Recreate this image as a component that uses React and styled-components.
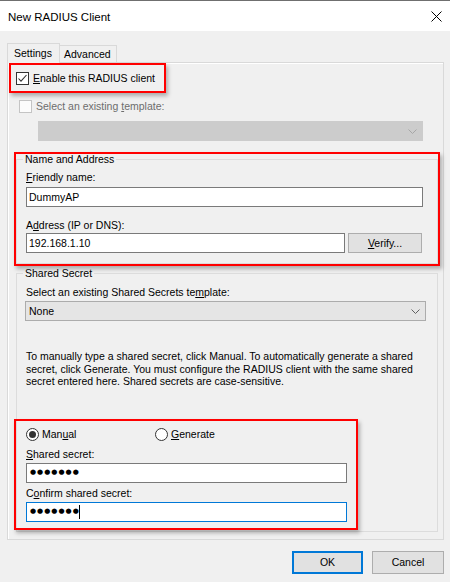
import React from 'react';
import styled, { createGlobalStyle } from 'styled-components';

const Global = createGlobalStyle`
  html, body { margin: 0; padding: 0; background: #f0f0f0; }
  body { font-family: "Liberation Sans", Arial, sans-serif; font-size: 10.5px; color: #000; }
  * { box-sizing: border-box; }
`;

const Window = styled.div`
  width: 450px;
  height: 582px;
  display: flex;
  flex-direction: column;
  border-top: 1px solid #6f6f6f;
  background: #f0f0f0;
  overflow: hidden;
`;

const TitleBar = styled.div`
  height: 30px;
  flex: none;
  background: #fff;
  display: flex;
  align-items: center;
  justify-content: space-between;
  padding: 0 8px;
`;

const TitleText = styled.span`
  font-size: 11.5px;
  line-height: 14px;
  margin-top: 1px;
`;

const Body = styled.div`
  padding: 12px 6px 0 7px;
  display: flex;
  flex-direction: column;
`;

const TabStrip = styled.div`
  display: flex;
  align-items: flex-end;
  height: 19px;
`;

const Tab = styled.div`
  height: ${p => (p.$active ? 20 : 17)}px;
  width: ${p => p.$w}px;
  margin-left: ${p => (p.$active ? 0 : -1)}px;
  margin-bottom: ${p => (p.$active ? -1 : 0)}px;
  padding-left: ${p => p.$pad}px;
  padding-bottom: ${p => (p.$active ? 1 : 0)}px;
  border: 1px solid #d9d9d9;
  border-bottom: none;
  background: #f0f0f0;
  display: flex;
  align-items: center;
  position: relative;
  z-index: ${p => (p.$active ? 2 : 1)};
`;

const Panel = styled.div`
  width: 437px;
  border: 1px solid #d9d9d9;
  box-shadow: inset 1px 1px 0 #fff;
  padding-bottom: 7px;
  display: flex;
  flex-direction: column;
  align-items: flex-start;
`;

const Highlight = styled.div`
  width: ${p => p.$w}px;
  ${p => (p.$h ? `height: ${p.$h}px;` : '')}
  margin: ${p => p.$m};
  padding: ${p => p.$pad || '0'};
  border: 2px solid #ff0000;
  box-shadow: 2px 3px 4px rgba(0, 0, 0, 0.28);
  display: flex;
  flex-direction: column;
  align-items: flex-start;
  justify-content: ${p => (p.$center ? 'center' : 'flex-start')};
`;

const CheckRow = styled.label`
  display: flex;
  align-items: center;
  gap: 4px;
  height: 13px;
  margin: ${p => p.$m || '0'};
  color: ${p => (p.$disabled ? '#6d6d6d' : '#000')};
  line-height: 13px;
`;

const Box = styled.span`
  width: 13px;
  height: 13px;
  flex: none;
  border: 1px solid ${p => (p.$disabled ? '#c4c4c4' : '#333')};
  background: ${p => (p.$disabled ? '#fcfcfc' : '#fff')};
  display: flex;
  align-items: center;
  justify-content: center;
`;

const Select = styled.div`
  width: ${p => p.$w}px;
  height: 20px;
  margin: ${p => p.$m || '0'};
  background: ${p => (p.$disabled ? '#cccccc' : '#e5e5e5')};
  border: 1px solid ${p => (p.$disabled ? '#cccccc' : '#acacac')};
  display: flex;
  align-items: center;
  justify-content: space-between;
  padding: 0 5px 0 3px;
  line-height: 13px;
`;

const Group = styled.fieldset`
  margin: ${p => p.$m || '0'};
  width: 422px;
  min-width: 0;
  border: 1px solid #dcdcdc;
  padding: ${p => p.$pad};
  display: flex;
  flex-direction: column;
  align-items: flex-start;
`;

const Legend = styled.legend`
  padding: 0 2px;
  margin-left: -3px;
  line-height: ${p => p.$lh}px;
  font-size: 10.5px;
`;

const Label = styled.div`
  line-height: 13px;
  height: 13px;
  margin: ${p => p.$m || '0'};
  white-space: nowrap;
`;

const Input = styled.div`
  width: ${p => p.$w}px;
  height: 20px;
  flex: none;
  margin: ${p => p.$m || '0'};
  background: #fff;
  border: 1px solid ${p => (p.$focus ? '#0078d7' : '#7a7a7a')};
  display: flex;
  align-items: center;
  padding-left: 2px;
  line-height: 13px;
`;

const Row = styled.div`
  display: flex;
  align-items: center;
  gap: ${p => p.$gap || 0}px;
  margin: ${p => p.$m || '0'};
`;

const Button = styled.div`
  width: ${p => p.$w}px;
  height: ${p => p.$h || 20}px;
  flex: none;
  background: #e1e1e1;
  border: ${p => (p.$default ? '2px solid #0078d7' : '1px solid #adadad')};
  display: flex;
  align-items: center;
  justify-content: center;
  line-height: 13px;
`;

const Paragraph = styled.p`
  margin: ${p => p.$m};
  line-height: 12.5px;
  white-space: nowrap;
`;

const RadioItem = styled.label`
  display: flex;
  align-items: center;
  gap: 3px;
  height: 13px;
  width: ${p => (p.$w ? `${p.$w}px` : 'auto')};
  line-height: 13px;
`;

const RadioCircle = styled.span`
  width: 13px;
  height: 13px;
  flex: none;
  border-radius: 50%;
  border: 1px solid #333;
  background: #fff;
  display: flex;
  align-items: center;
  justify-content: center;
  &::after {
    content: '';
    display: ${p => (p.$on ? 'block' : 'none')};
    width: 7px;
    height: 7px;
    border-radius: 50%;
    background: #333;
  }
`;

const Dots = styled.span`
  font-family: "DejaVu Sans", sans-serif;
  font-size: 7px;
  letter-spacing: 1px;
  line-height: 13px;
  margin-left: 1px;
`;

const Caret = styled.span`
  width: 1px;
  height: 14px;
  background: #000;
  margin-left: -1px;
`;

const ButtonBar = styled.div`
  display: flex;
  justify-content: flex-end;
  gap: 9px;
  margin-top: 11px;
`;

const Chevron = ({ color }) => (
  <svg width="9" height="5" viewBox="0 0 9 5">
    <polyline points="0.5,0.5 4.5,4.5 8.5,0.5" fill="none" stroke={color} strokeWidth="1" />
  </svg>
);

export default function App() {
  return (
    <>
      <Global />
      <Window>
        <TitleBar>
          <TitleText>New RADIUS Client</TitleText>
          <svg width="11" height="11" viewBox="0 0 11 11">
            <path d="M0.5 0.5 L10.5 10.5 M10.5 0.5 L0.5 10.5" stroke="#000" strokeWidth="1" />
          </svg>
        </TitleBar>
        <Body>
          <TabStrip>
            <Tab $active $w={53} $pad={6}>Settings</Tab>
            <Tab $w={58} $pad={4}>Advanced</Tab>
          </TabStrip>
          <Panel>
            <Highlight $w={157} $h={30} $m="0 0 0 1px" $pad="0 0 0 5px" $center>
              <CheckRow>
                <Box>
                  <svg width="11" height="11" viewBox="0 0 11 11">
                    <polyline points="1.5,5.5 4,8.2 9.5,2" fill="none" stroke="#333" strokeWidth="1.1" />
                  </svg>
                </Box>
                <span><u>E</u>nable this RADIUS client</span>
              </CheckRow>
            </Highlight>

            <CheckRow $disabled $m="7px 0 0 11px">
              <Box $disabled />
              <span>Select an existing <u>t</u>emplate:</span>
            </CheckRow>

            <Select $disabled $w={385} $m="8px 0 0 30px">
              <span />
              <Chevron color="#a6a6a6" />
            </Select>

            <Highlight $w={426} $m="11px 0 0 6px">
              <Group $pad="7px 0 10px 9px">
                <Legend $lh={10}>Name and Address</Legend>
                <Label><u>F</u>riendly name:</Label>
                <Input $w={397} $m="3px 0 0 0">DummyAP</Input>
                <Label $m="12px 0 0 0">A<u>d</u>dress (IP or DNS):</Label>
                <Row $gap={3} $m="1px 0 0 0">
                  <Input $w={319}>192.168.1.10</Input>
                  <Button $w={74}><span><u>V</u>erify...</span></Button>
                </Row>
              </Group>
            </Highlight>

            <Group $m="1px 0 0 8px" $pad="7px 0 1px 9px">
              <Legend $lh={12}>Shared Secret</Legend>
              <Label>Select an existing Shared Secrets te<u>m</u>plate:</Label>
              <Select $w={401} $m="2px 0 0 -1px">
                <span>None</span>
                <Chevron color="#606060" />
              </Select>
              <Paragraph $m="29px 0 0 0">
                To manually type a shared secret, click Manual. To automatically generate a shared<br />
                secret, click Generate. You must configure the RADIUS client with the same shared<br />
                secret entered here. Shared secrets are case-sensitive.
              </Paragraph>
              <Highlight $w={344} $m="31px 0 0 -12px" $pad="7px 0 6px 10px">
                <Row>
                  <RadioItem $w={129}>
                    <RadioCircle $on />
                    <span>Man<u>u</u>al</span>
                  </RadioItem>
                  <RadioItem>
                    <RadioCircle />
                    <span><u>G</u>enerate</span>
                  </RadioItem>
                </Row>
                <Label $m="7px 0 0 0"><u>S</u>hared secret:</Label>
                <Input $w={321} $m="2px 0 0 0"><Dots>●●●●●●●</Dots></Input>
                <Label $m="4px 0 0 0">C<u>o</u>nfirm shared secret:</Label>
                <Input $w={321} $m="2px 0 0 0" $focus><Dots>●●●●●●●</Dots><Caret /></Input>
              </Highlight>
            </Group>
          </Panel>
          <ButtonBar>
            <Button $w={71} $h={23} $default>OK</Button>
            <Button $w={72} $h={23}>Cancel</Button>
          </ButtonBar>
        </Body>
      </Window>
    </>
  );
}
